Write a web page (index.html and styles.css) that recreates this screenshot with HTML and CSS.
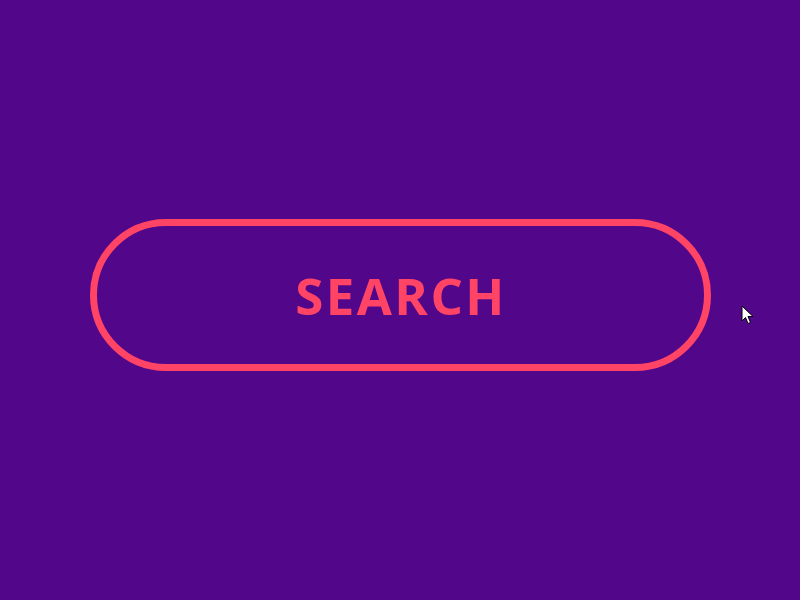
FILE: index.html
```html
<!DOCTYPE html>
<html>
<head>
<meta charset="utf-8">
<link rel="stylesheet" href="styles.css">
</head>
<body>
<main class="stage">
  <button class="search-btn">SEARCH</button>
  <svg class="cursor" width="14" height="20" viewBox="0 0 14 20">
    <path d="M1 1 L1 16 L4.5 12.5 L7 18.5 L9.5 17.5 L7 11.5 L12 11.5 Z" fill="#fff" stroke="#000" stroke-width="1" stroke-linejoin="miter"/>
  </svg>
</main>
</body>
</html>
```
FILE: styles.css
```css
html, body {
  margin: 0;
  padding: 0;
  background: #52068a;
}
.stage {
  position: relative;
  width: 800px;
  height: 600px;
  box-sizing: border-box;
  padding-bottom: 10px;
  display: flex;
  align-items: center;
  justify-content: center;
}
.search-btn {
  width: 621px;
  height: 152px;
  box-sizing: border-box;
  border: 7px solid #ff4466;
  border-radius: 76px;
  background: transparent;
  color: #ff4466;
  font-family: "Open Sans", sans-serif;
  font-weight: 700;
  font-size: 51px;
  letter-spacing: 2.4px;
  padding: 0 0 0 2px;
  margin: 0;
}
.cursor {
  position: absolute;
  left: 741px;
  top: 305px;
}
```
